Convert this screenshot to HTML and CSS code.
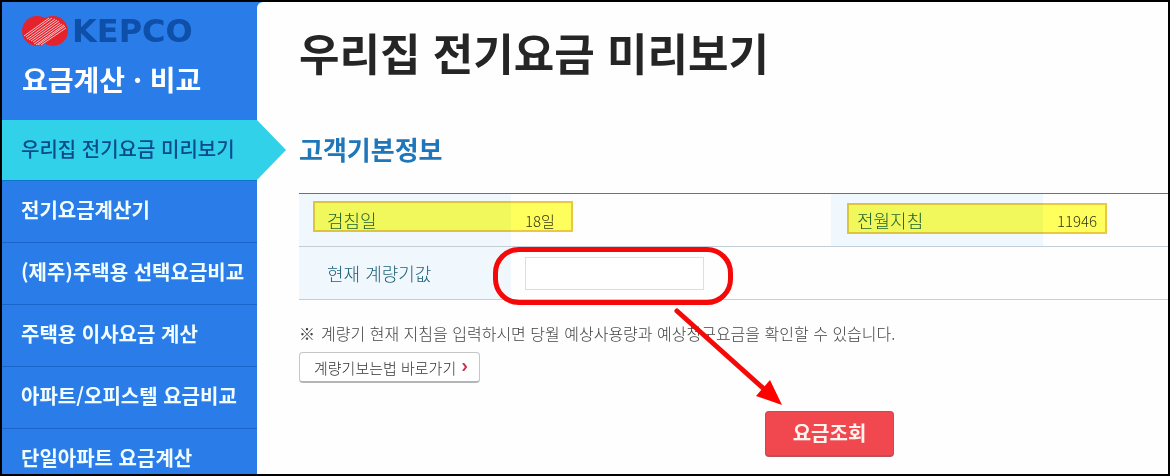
FILE: index.html
```html
<!DOCTYPE html>
<html lang="ko">
<head>
    <meta charset="UTF-8">
    <meta name="viewport" content="width=device-width, initial-scale=1.0">
    <title>우리집 전기요금 미리보기</title>
    <link rel="stylesheet" href="styles.css">
</head>
<body>

    <div class="page">
        <!-- Left menu -->
        <aside class="sidebar">
            <div class="sidebar-head">
                <a class="logo" href="#">
                    <svg class="logo-mark" viewBox="0 0 46 30" aria-hidden="true">
                        <circle cx="15" cy="15" r="15" fill="#e5232d"/>
                        <circle cx="31" cy="15" r="15" fill="#e5232d"/>
                        <g stroke="#f8c3c6" stroke-width="1">
                            <path d="M2 20L27 2M4 21L30 2M5 23L33 3M7 24L35 4M9 25L37 5M11 26L38 7M12 28L40 8M14 29L42 9M16 29L43 10M19 29L44 12"/>
                        </g>
                    </svg>
                    <span class="logo-text">KEPCO</span>
                </a>
                <p class="sidebar-title">요금계산 · 비교</p>
            </div>
            <nav class="menu">
                <a class="menu-item active" href="#">우리집 전기요금 미리보기</a>
                <a class="menu-item" href="#">전기요금계산기</a>
                <a class="menu-item" href="#">(제주)주택용 선택요금비교</a>
                <a class="menu-item" href="#">주택용 이사요금 계산</a>
                <a class="menu-item" href="#">아파트/오피스텔 요금비교</a>
                <a class="menu-item" href="#">단일아파트 요금계산</a>
            </nav>
        </aside>

        <!-- Content -->
        <main class="content">
            <h1>우리집 전기요금 미리보기</h1>
            <h2>고객기본정보</h2>

            <form onsubmit="return false">
                <table class="info">
                    <colgroup>
                        <col class="col-label">
                        <col class="col-wide">
                        <col class="col-label">
                        <col>
                    </colgroup>
                    <tr>
                        <th scope="row">검침일<span class="mark"></span></th>
                        <td>18일</td>
                        <th scope="row" class="second">전월지침<span class="mark"></span></th>
                        <td>11946</td>
                    </tr>
                    <tr>
                        <th scope="row"><label for="meter">현재 계량기값</label></th>
                        <td colspan="3">
                            <input type="text" id="meter" class="meter">
                            <span class="ring"></span>
                            <svg class="arrow" viewBox="0 0 110 100" aria-hidden="true">
                                <path d="M4 5L91 83" stroke="#f40808" stroke-width="5" stroke-linecap="round"/>
                                <path d="M109 99L97 74L83 90Z" fill="#ff0000"/>
                            </svg>
                        </td>
                    </tr>
                </table>

                <p class="notice"><span>※</span>계량기 현재 지침을 입력하시면 당월 예상사용량과 예상청구요금을 확인할 수 있습니다.</p>
                <button type="button" class="guide">계량기보는법 바로가기
                    <svg class="chevron" viewBox="0 0 6 8" aria-hidden="true">
                        <path d="M1 0L4 4L1 8" fill="none" stroke="#c9304f" stroke-width="2"/>
                    </svg>
                </button>
                <div class="actions">
                    <button type="submit" class="submit">요금조회</button>
                </div>
            </form>
        </main>
    </div>

</body>
</html>
```
FILE: styles.css
```css
* {
    margin: 0;
    padding: 0;
    box-sizing: border-box;
}

body {
    font-family: "Noto Sans CJK KR", "Noto Sans", sans-serif;
    color: #444;
}

button, input {
    font-family: inherit;
}

.page {
    display: flex;
    height: 100vh;
    border: 2px solid #000;
    background-color: #2a7de8;
    overflow: hidden;
}

/* Left menu */
.sidebar {
    flex: 0 0 255px;
    position: relative;
    z-index: 1;
}

.sidebar-head {
    height: 118px;
    padding: 13px 20px 0;
}

.logo {
    display: flex;
    align-items: center;
    gap: 4px;
    height: 32px;
    text-decoration: none;
}

.logo-mark {
    width: 46px;
    height: 30px;
}

.logo-text {
    font-family: "DejaVu Sans", sans-serif;
    font-size: 32px;
    font-weight: bold;
    line-height: 32px;
    color: #0d4fa9;
}

.sidebar-title {
    margin-top: 12px;
    font-size: 28px;
    font-weight: bold;
    line-height: 40px;
    white-space: nowrap;
    color: #fff;
}

.menu-item {
    display: block;
    height: 62px;
    padding-left: 19px;
    border-bottom: 1px solid #1766c8;
    font-size: 20px;
    font-weight: bold;
    line-height: 58px;
    white-space: nowrap;
    text-decoration: none;
    color: #f2fdff;
}

.menu-item.active {
    position: relative;
    height: 61px;
    border-bottom-color: #0a76cc;
    background-color: #31d2e9;
    font-weight: 500;
    color: #0c4a8c;
}

/* Pointer on the right of the current item */
.menu-item.active::after {
    content: "";
    position: absolute;
    top: 0;
    left: 100%;
    width: 29px;
    height: 60px;
    background-color: #31d2e9;
    clip-path: polygon(0 0, 100% 50%, 0 100%);
}

/* Content */
.content {
    flex: 1;
    min-width: 0;
    padding: 16px 0 0 42px;
    border-top-left-radius: 6px;
    background-color: #fefefe;
}

h1 {
    font-size: 44px;
    line-height: 68px;
    color: #252525;
}

h2 {
    margin-top: 43px;
    font-size: 26px;
    line-height: 40px;
    color: #1f76b8;
}

.info {
    width: 100%;
    margin-top: 24px;
    border-collapse: collapse;
    border-top: 1px solid #3d83a0;
    table-layout: fixed;
}

.col-label {
    width: 212px;
}

.col-wide {
    width: 320px;
}

.info th,
.info td {
    position: relative;
    height: 53px;
    border-bottom: 1px solid #c3cfd8;
    text-align: left;
    font-weight: 300;
}

.info th {
    padding-left: 28px;
    background-color: #f0f8fd;
    font-size: 18px;
    color: #1f6178;
}

.info th.second {
    padding-left: 26px;
}

.info td {
    padding-left: 14px;
    font-size: 15px;
    color: #333;
}

/* Yellow marker over label and value */
.mark {
    position: absolute;
    z-index: 1;
    top: 7px;
    left: 14px;
    width: 260px;
    height: 31px;
    border: 2px solid #eacb3e;
    background-color: #ffff5c;
    mix-blend-mode: multiply;
}

.second .mark {
    top: 9px;
    left: 16px;
}

.meter {
    display: block;
    width: 179px;
    height: 33px;
    padding: 0 8px;
    border: 1px solid #dcdfe1;
    background-color: #fff;
    font-size: 15px;
}

.ring {
    position: absolute;
    z-index: 1;
    top: 0;
    left: -18px;
    width: 240px;
    height: 58px;
    border: 5px solid #f40808;
    border-radius: 26px;
    pointer-events: none;
}

.arrow {
    position: absolute;
    z-index: 1;
    top: 59px;
    left: 162px;
    width: 110px;
    height: 100px;
    pointer-events: none;
}

.notice {
    margin-top: 20px;
    font-size: 16px;
    font-weight: 300;
    line-height: 26px;
    white-space: nowrap;
    color: #444;
}

.notice span {
    margin-right: 6px;
}

.guide {
    display: flex;
    align-items: center;
    gap: 6px;
    height: 31px;
    margin-top: 6px;
    padding: 0 11px 0 14px;
    border: 1px solid #c6c6c6;
    border-bottom: 2px solid #b5b5b5;
    border-radius: 4px;
    background-color: #fff;
    font-size: 15px;
    font-weight: 300;
    color: #333;
}

.chevron {
    width: 6px;
    height: 8px;
}

.actions {
    display: flex;
    margin-top: 28px;
    padding-left: 466px;
}

.submit {
    width: 129px;
    height: 46px;
    padding-bottom: 3px;
    border: 1px solid #d9434d;
    border-bottom: 2px solid #b8525a;
    border-radius: 4px;
    background-color: #f14850;
    font-size: 20px;
    font-weight: bold;
    color: #fff4ee;
}
```
